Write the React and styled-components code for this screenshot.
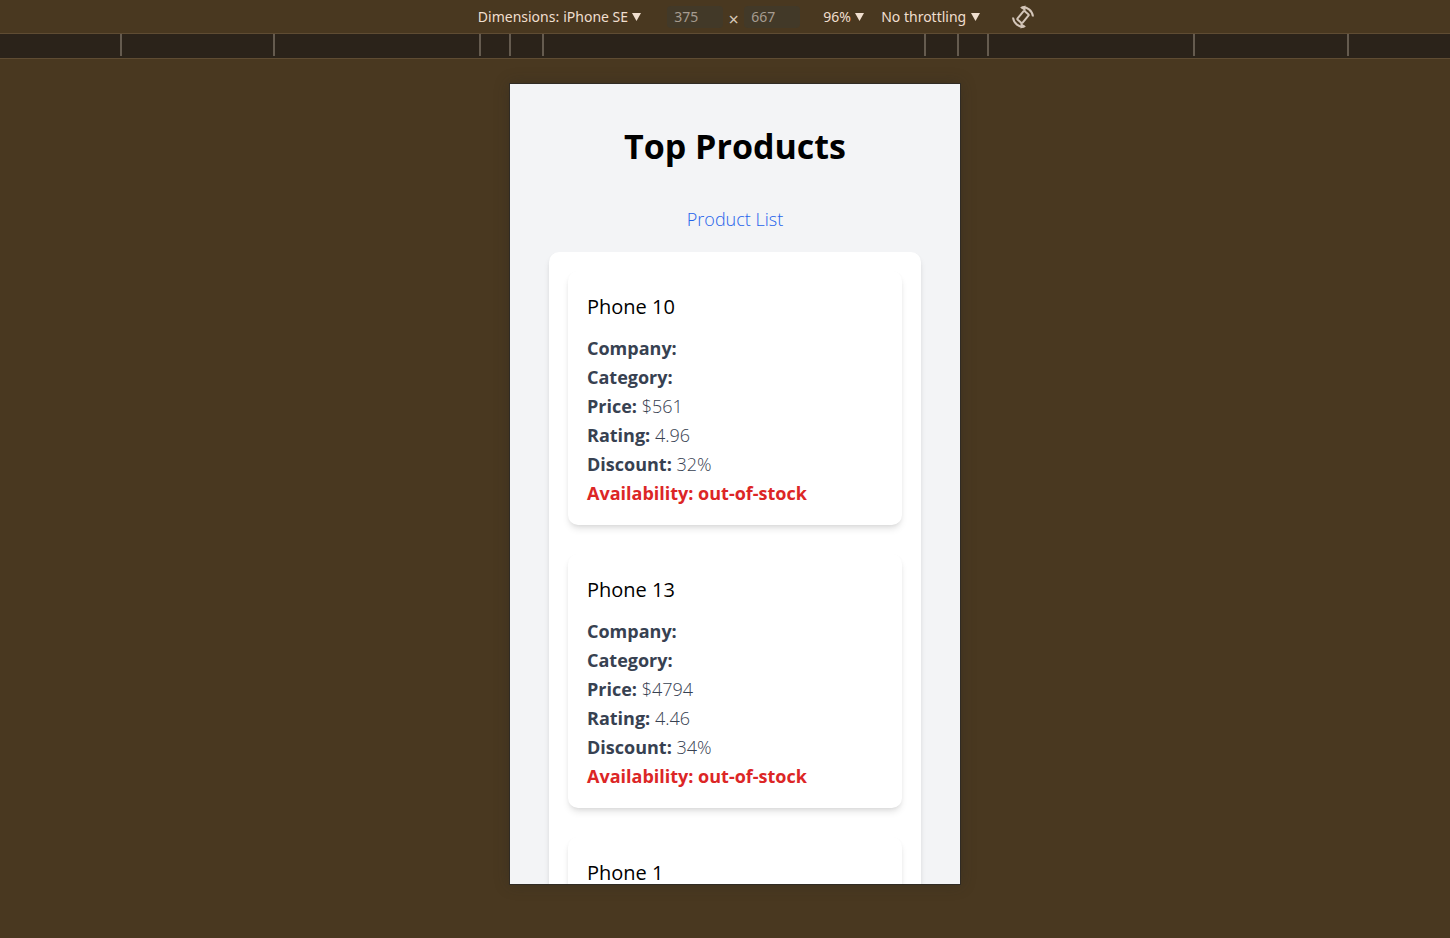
import React from "react";
import styled, { createGlobalStyle } from "styled-components";

const GlobalStyle = createGlobalStyle`
  *, *::before, *::after { box-sizing: border-box; }
  body {
    margin: 0;
    background: #493820;
    font-family: "Open Sans", "Noto Sans", sans-serif;
  }
  h1, h2, p, ul { margin: 0; padding: 0; }
`;

const Workspace = styled.div`
  min-height: 100vh;
  display: flex;
  flex-direction: column;
`;

const Toolbar = styled.header`
  height: 34px;
  padding-left: 63px;
  display: flex;
  align-items: center;
  justify-content: center;
  border-bottom: 1px solid #5f4c33;
  background: #493820;
  color: #f0dfcf;
  font-family: "Noto Sans", sans-serif;
  font-size: 14px;
  line-height: 20px;
`;

const Picker = styled.label`
  display: flex;
  align-items: center;
  gap: 4px;
  margin-right: ${({ $after }) => $after || 0}px;
  white-space: nowrap;
`;

const Select = styled.select`
  appearance: none;
  padding: 0;
  border: 0;
  background: transparent;
  color: inherit;
  font: inherit;
`;

const SizeGroup = styled.div`
  display: flex;
  align-items: center;
  margin-right: 23px;
  color: #d6c8b8;
`;

const SizeInput = styled.input`
  width: 56px;
  height: 22px;
  padding: 0 7px;
  border: 0;
  border-radius: 4px;
  background: #423928;
  color: #a69c90;
  font: inherit;
`;

const Times = styled.span`
  width: 21px;
  padding-top: 4px;
  font-size: 18px;
  text-align: center;
`;

const IconButton = styled.button`
  display: flex;
  padding: 0;
  border: 0;
  background: transparent;
  color: #d3c5b8;
`;

const Ruler = styled.div`
  height: 25px;
  padding-left: 18px;
  display: flex;
  justify-content: center;
  overflow: hidden;
  border-bottom: 1px solid #5f4c33;
  background: #2b231a;
`;

const Segment = styled.span`
  flex: none;
  width: ${({ $width }) => $width}px;
  height: 22px;
  border-left: 2px solid #655b4f;
`;

const Stage = styled.main`
  flex: 1;
  display: flex;
  justify-content: center;
  align-items: flex-start;
  padding: 25px 0 25px 20px;
`;

const Device = styled.section`
  width: 450px;
  height: 800px;
  padding: 38px 39px;
  overflow: hidden;
  background: #f3f4f6;
  box-shadow: 0 0 0 1px #302b24, 0 0 14px rgba(40, 40, 36, 0.4);
  color: #000;
`;

const Title = styled.h1`
  margin-bottom: 32px;
  font-size: 34px;
  line-height: 48px;
  font-weight: 700;
  text-align: center;
`;

const ListLink = styled.a`
  display: block;
  margin-bottom: 16px;
  color: #2563eb;
  font-size: 18px;
  font-weight: 300;
  line-height: 34px;
  text-align: center;
  text-decoration: none;
`;

const cardSurface = `
  border-radius: 10px;
  background: #fff;
  box-shadow: 0 5px 7px -1px rgba(0, 0, 0, 0.1), 0 2px 5px -2px rgba(0, 0, 0, 0.1);
`;

const ProductList = styled.ul`
  ${cardSurface}
  display: flex;
  flex-direction: column;
  gap: 29px;
  min-height: 720px;
  padding: 19px;
  list-style: none;
`;

const Card = styled.li`
  ${cardSurface}
  min-height: 254px;
  padding: 19px 19px 17px;
`;

const CardTitle = styled.h2`
  margin-bottom: 10px;
  font-size: 20px;
  font-weight: 400;
  line-height: 34px;
`;

const Detail = styled.p`
  color: ${({ $alert }) => ($alert ? "#dc2626" : "#374151")};
  font-size: 18px;
  font-weight: ${({ $alert }) => ($alert ? 700 : 300)};
  line-height: 29px;

  strong { font-weight: 700; }
`;

const segments = [153, 206, 30, 33, 382, 33, 30, 206, 154, 2];

const products = [
  { name: "Phone 10", price: 561, rating: "4.96", discount: 32 },
  { name: "Phone 13", price: 4794, rating: "4.46", discount: 34 },
  { name: "Phone 1" },
];

const Arrow = () => (
  <svg width="9" height="8" viewBox="0 0 9 8" aria-hidden="true">
    <path d="M0 0h9L4.5 8z" fill="currentColor" />
  </svg>
);

const RotateIcon = () => (
  <svg width="24" height="24" viewBox="0 0 24 24" fill="none" stroke="currentColor" strokeWidth="2" aria-hidden="true">
    <rect x="8.700" y="6.500" width="6.600" height="11" rx="1" transform="rotate(40 12 12)" />
    <path d="M10.500 2.400C16 1.500 21.300 5.500 22 11.500M13.500 21.600C8 22.500 2.700 18.500 2 12.500" />
    <path d="M9 2.600 14.500 .6v5.600zM15 21.400 9.500 23.400v-5.600z" fill="currentColor" stroke="none" />
  </svg>
);

function ProductCard({ product }) {
  return (
    <Card>
      <CardTitle>{product.name}</CardTitle>
      {product.price && (
        <>
          <Detail><strong>Company:</strong></Detail>
          <Detail><strong>Category:</strong></Detail>
          <Detail><strong>Price:</strong> ${product.price}</Detail>
          <Detail><strong>Rating:</strong> {product.rating}</Detail>
          <Detail><strong>Discount:</strong> {product.discount}%</Detail>
          <Detail $alert>Availability: out-of-stock</Detail>
        </>
      )}
    </Card>
  );
}

export default function App() {
  return (
    <>
      <GlobalStyle />
      <Workspace>
        <Toolbar>
          <Picker $after={26}>
            Dimensions:
            <Select><option>iPhone SE</option></Select>
            <Arrow />
          </Picker>
          <SizeGroup>
            <SizeInput aria-label="Width" defaultValue="375" />
            <Times>×</Times>
            <SizeInput aria-label="Height" defaultValue="667" />
          </SizeGroup>
          <Picker $after={17}>
            <Select aria-label="Zoom"><option>96%</option></Select>
            <Arrow />
          </Picker>
          <Picker $after={31}>
            <Select aria-label="Throttling"><option>No throttling</option></Select>
            <Arrow />
          </Picker>
          <IconButton type="button" aria-label="Rotate"><RotateIcon /></IconButton>
        </Toolbar>
        <Ruler>
          {segments.map((width, i) => <Segment key={i} $width={width} />)}
        </Ruler>
        <Stage>
          <Device>
            <Title>Top Products</Title>
            <ListLink href="#products">Product List</ListLink>
            <ProductList id="products">
              {products.map((p) => <ProductCard key={p.name} product={p} />)}
            </ProductList>
          </Device>
        </Stage>
      </Workspace>
    </>
  );
}
